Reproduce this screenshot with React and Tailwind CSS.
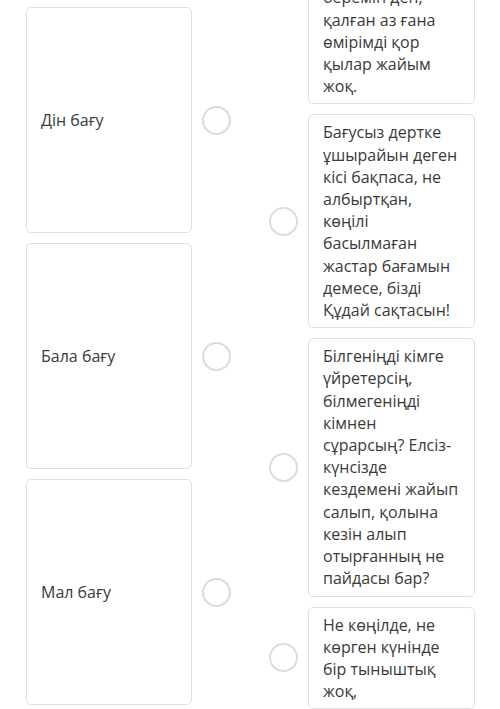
const left = ["Дін бағу", "Бала бағу", "Мал бағу"];

const right = [
  "Мал бағайын десем, бағып тұра алмаймын. Қызығына әуре болып, малымды ұрыға, залымға, тіленшіге бағып беремін деп, қалған аз ғана өмірімді қор қылар жайым жоқ.",
  "Бағусыз дертке ұшырайын деген кісі бақпаса, не албыртқан, көңілі басылмаған жастар бағамын демесе, бізді Құдай сақтасын!",
  "Білгеніңді кімге үйретерсің, білмегеніңді кімнен сұрарсың? Елсіз-күнсізде кездемені жайып салып, қолына кезін алып отырғанның не пайдасы бар?",
  "Не көңілде, не көрген күнінде бір тыныштық жоқ,",
];

function Radio() {
  return <div className="size-[29px] shrink-0 rounded-full border-2 border-[#dcdcdc] bg-white" />;
}

export default function App() {
  return (
    <div
      className="flex h-[709px] overflow-hidden bg-white pl-[26px] text-[16px] text-[#3a3a3a]"
      style={{ fontFamily: '"Open Sans", "Noto Sans", sans-serif' }}
    >
      {/* left column */}
      <div className="flex w-[205px] flex-col gap-[10px] pt-[7px]">
        {left.map((t) => (
          <div key={t} className="flex items-center gap-[10px]">
            <div className="flex h-[226px] w-[166px] items-center rounded-[5px] border border-[#e0e0e0] bg-white px-[14px]">
              {t}
            </div>
            <Radio />
          </div>
        ))}
      </div>

      {/* right column */}
      <div className="ml-[38px] mt-[-176px] flex w-[206px] flex-col gap-[10px]">
        {right.map((t, i) => (
          <div key={i} className="flex items-center gap-[10px]">
            <Radio />
            <div className="w-[167px] rounded-[5px] border border-[#e0e0e0] bg-white px-[14px] py-[6px] leading-[22.2px]">
              {t}
            </div>
          </div>
        ))}
      </div>
    </div>
  );
}
